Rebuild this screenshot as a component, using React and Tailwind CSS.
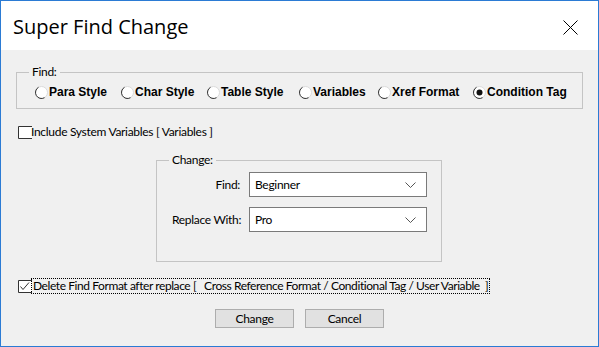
import React from "react";

const Radio = ({ checked }) => (
  <svg width="13" height="13" viewBox="0 0 13 13" className="shrink-0">
    <circle cx="6.5" cy="6.5" r="6" fill="#fff" stroke="#dadada" />
    <path d="M3.5 1.3 A6 6 0 0 0 9.5 11.7" fill="none" stroke="#333" strokeWidth="1" />
    {checked && <circle cx="6.5" cy="6.5" r="3" fill="#111" />}
  </svg>
);

const Check = ({ checked }) => (
  <svg width="14" height="13" viewBox="0 0 14 13" className="shrink-0">
    <path d="M14 0.5 H0.5 V12.5 H14" fill="#fff" stroke="#333" strokeWidth="1" />
    {checked && <polyline points="2.5,6.5 5,9.5 11,2.5" fill="none" stroke="#333" strokeWidth="1" />}
  </svg>
);

const Chevron = () => (
  <svg width="11" height="6" viewBox="0 0 11 6">
    <polyline points="0.5,0.5 5.5,5.5 10.5,0.5" fill="none" stroke="#555" strokeWidth="1" />
  </svg>
);

const radios = [
  { label: "Para Style", w: "w-[86px]" },
  { label: "Char Style", w: "w-[86px]" },
  { label: "Table Style", w: "w-[92px]" },
  { label: "Variables", w: "w-[79px]" },
  { label: "Xref Format", w: "w-[95px]" },
  { label: "Condition Tag", w: "w-[100px]", checked: true },
];

export default function App() {
  return (
    <div className="w-[599px] h-[347px] border border-[#2b7bd4] bg-[#f0f0f0] flex flex-col overflow-hidden font-['Lato',sans-serif] text-[12px] tracking-[-0.3px] text-black">
      <div className="h-[49px] bg-white flex items-center justify-between pl-[12px] pr-[20px] pt-[3px] shrink-0">
        <span className="text-[20px] font-['Open_Sans',sans-serif] leading-none tracking-normal">Super Find Change</span>
        <svg width="15" height="15" viewBox="0 0 15 15">
          <line x1="0.5" y1="0.5" x2="14.5" y2="14.5" stroke="#000" strokeWidth="1" />
          <line x1="14.5" y1="0.5" x2="0.5" y2="14.5" stroke="#000" strokeWidth="1" />
        </svg>
      </div>
      <div className="flex-1 flex flex-col pl-[15px]">
        <fieldset className="mt-[15px] w-[567px] border border-[#c4c4c4] pb-[9px]">
          <legend className="ml-[12px] px-[3px] leading-[14px]">Find:</legend>
          <div className="flex items-center mt-[6px] pl-[18px] h-[14px]">
            {radios.map((r) => (
              <div key={r.label} className={`flex items-center shrink-0 ${r.w}`}>
                <Radio checked={r.checked} />
                <span className="font-['Liberation_Sans',sans-serif] font-bold leading-[14px] ml-[1px] tracking-normal whitespace-nowrap">{r.label}</span>
              </div>
            ))}
          </div>
        </fieldset>

        <div className="flex items-center mt-[16px] ml-[2px] h-[14px]">
          <Check />
          <span className="leading-[14px] -ml-[1px] whitespace-nowrap">Include System Variables [ Variables ]</span>
        </div>

        <fieldset className="mt-[14px] ml-[140px] w-[286px] border border-[#c4c4c4] pb-[29px]">
          <legend className="ml-[12px] px-[3px] leading-[14px]">Change:</legend>
          <div className="flex flex-col gap-[10px] mt-[5px] pl-[15px]">
            {[
              ["Find:", "Beginner"],
              ["Replace With:", "Pro"],
            ].map(([l, v]) => (
              <div key={l} className="flex items-center">
                <span className="w-[68px] text-right whitespace-nowrap">{l}</span>
                <div className="ml-[9px] w-[178px] h-[25px] bg-white border border-[#7a7a7a] flex items-center justify-between pl-[5px] pr-[10px]">
                  <span>{v}</span>
                  <Chevron />
                </div>
              </div>
            ))}
          </div>
        </fieldset>

        <div className="flex items-center mt-[16px] ml-[2px] h-[16px]">
          <Check checked />
          <span className="-ml-[1px] h-[16px] leading-[14px] border border-dotted border-black px-[1px] whitespace-pre tracking-[-0.42px]">
            {"Delete Find Format after replace [   Cross Reference Format / Conditional Tag / User Variable  ]"}
          </span>
        </div>

        <div className="flex mt-[15px] ml-[199px] gap-[11px]">
          <button className="w-[79px] h-[19px] bg-[#e1e1e1] border border-[#adadad] leading-[17px] text-center">Change</button>
          <button className="w-[79px] h-[19px] bg-[#e1e1e1] border border-[#adadad] leading-[17px] text-center">Cancel</button>
        </div>
      </div>
    </div>
  );
}
